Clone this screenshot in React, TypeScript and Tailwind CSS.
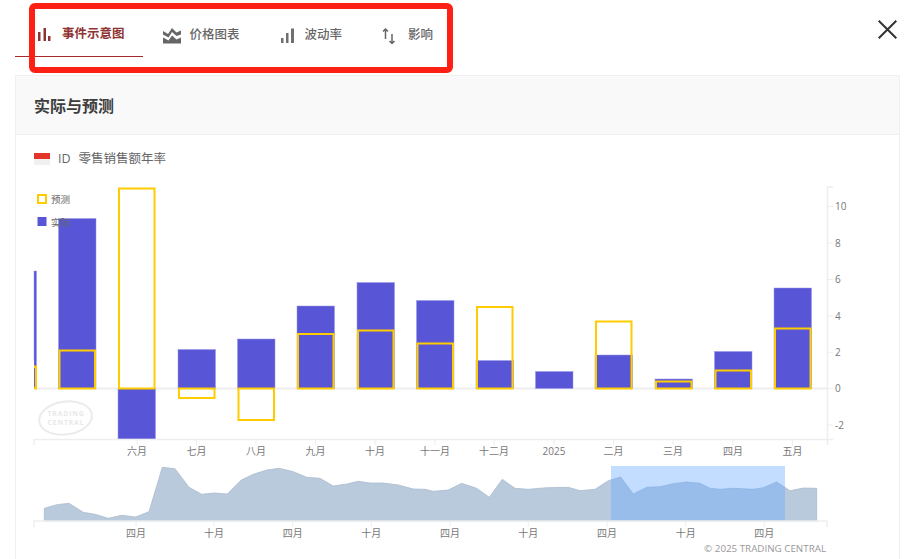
const cjk = '"Open Sans","Noto Sans CJK SC",sans-serif';

const bars: { x: number; a: number; f?: number; w?: number }[] = [
  { x: 34, a: 271, f: 366.5, w: 2.5 },
  { x: 58.5, a: 218.5, f: 350.5 },
  { x: 118, a: 439, f: 188.5 },
  { x: 178, a: 349.5, f: 398 },
  { x: 237.5, a: 339, f: 420 },
  { x: 297, a: 306, f: 334 },
  { x: 357, a: 282.5, f: 330.5 },
  { x: 416.5, a: 300.5, f: 343.5 },
  { x: 476, a: 360.5, f: 307 },
  { x: 535.5, a: 371.5 },
  { x: 595, a: 355, f: 321.5 },
  { x: 655, a: 379, f: 381.5 },
  { x: 714.5, a: 351.5, f: 370.5 },
  { x: 774, a: 288, f: 328.5 },
];
const zero = 388.5;
const months: [number, string][] = [
  [137, "六月"], [196.5, "七月"], [256, "八月"], [315.5, "九月"], [375, "十月"], [435, "十一月"],
  [494, "十二月"], [554, "2025"], [613.5, "二月"], [673, "三月"], [733, "四月"], [792.5, "五月"],
];
const yTicks: [number, string][] = [
  [206.5, "10"], [243, "8"], [279.5, "6"], [316, "4"], [352.3, "2"], [388.5, "0"], [425, "-2"],
];
const navLabels: [number, string][] = [
  [136, "四月"], [214, "十月"], [292.7, "四月"], [371.3, "十月"], [450, "四月"], [528.3, "十月"],
  [607, "四月"], [685.7, "十月"], [764.3, "四月"],
];
const area =
  "44.3,508.3 56.7,504.7 69,503.3 83.3,512.3 95,514.3 108.3,518.3 121.7,515.3 135.7,517 149,511.7 162.3,467.3 175,468.7 189,487.3 201.7,494.3 214,493 227.3,494 241.3,480 253.3,474.3 266.7,470 279.3,468.3 293.3,471.7 306.7,477.3 320,478.3 333.3,486 346.7,484 358.3,481.3 370,483 383.3,483 398.3,485 413.3,489 425,489.3 433.3,491.3 448.3,490 461.7,483.3 476.7,488.3 489.3,497.3 502.3,479.3 515,488.3 528.3,489.3 546.7,487.7 568.3,487.3 580,490.7 595,489.3 608.3,480.7 620.7,477 633.3,494 646.7,487.3 660,486.7 673.3,483.7 686.7,482 700,483.3 710,488.3 720,489.3 733.3,488.3 753.3,489.3 763.3,487.7 776.7,482 790,490.7 803.3,488 816.7,488.3";

function Chart() {
  return (
    <svg width="883" height="379" viewBox="16 180 883 379" className="block" style={{ fontFamily: cjk }}>
      <line x1="34" x2="827" y1={zero} y2={zero} stroke="#eeeeee" strokeWidth="2" />
      {bars.map((b, i) => {
        const w = b.w ?? 37.5;
        return (
          <rect key={i} x={b.x} y={Math.min(b.a, zero)} width={w} height={Math.abs(zero - b.a)} fill="#5856d6" stroke="#9796e6" strokeWidth="0.5" />
        );
      })}
      {bars.map((b, i) =>
        b.f === undefined ? null : (
          <rect
            key={i}
            x={i === 0 ? 33 : b.x + 1}
            y={Math.min(b.f, zero)}
            width={i === 0 ? 3 : 35.5}
            height={Math.abs(zero - b.f)}
            fill="none"
            stroke="#ffcc00"
            strokeWidth="2"
          />
        ),
      )}
      <rect x="30" y="360" width="4" height="32" fill="#ffffff" />
      <g fontSize="9.5" fill="#666666">
        <rect x="38" y="195" width="8" height="8" fill="#ffffff" stroke="#ffcc00" strokeWidth="2" />
        <text x="51" y="203">预测</text>
        <rect x="37.5" y="217" width="9" height="9" fill="#5856d6" />
        <text x="51" y="226">实际</text>
      </g>
      <ellipse cx="65.5" cy="418" rx="26.5" ry="16.5" fill="none" stroke="#ebebeb" strokeWidth="2" transform="rotate(-8 65.5 418)" />
      <g fontSize="6.8" fontWeight="700" fill="#e8e8e8" letterSpacing="0.9" textAnchor="middle" style={{ fontFamily: '"Open Sans",sans-serif' }}>
        <text x="66" y="415.5">TRADING</text>
        <text x="66" y="425">CENTRAL</text>
      </g>
      <g stroke="#eeeeee" fill="none">
        <path d="M833 187H827.5V445" strokeWidth="1.5" />
        <path d="M34 445V439.5H833" strokeWidth="1.5" />
        {yTicks.map(([y]) => <line key={y} x1="827" x2="833" y1={y} y2={y} />)}
        {months.map(([x]) => <line key={x} x1={x} x2={x} y1="440" y2="445" />)}
      </g>
      <g fontSize="10" fill="#777777">
        {yTicks.map(([y, t]) => <text key={t} x="835" y={y + 3.5}>{t}</text>)}
        {months.map(([x, t]) => <text key={t} x={x} y="455" textAnchor="middle">{t}</text>)}
      </g>
      <polygon points={`${area} 816.7,521 44.3,521`} fill="#b9cadd" stroke="#a8b9cc" strokeWidth="0.75" />
      <rect x="611" y="466" width="174" height="55" fill="#66aaff" fillOpacity="0.4" />
      <g stroke="#eeeeee" fill="none">
        <path d="M34 527V521H827V527" strokeWidth="1.5" />
        {navLabels.map(([x]) => <line key={x} x1={x} x2={x} y1="521" y2="527" />)}
      </g>
      <g fontSize="10" fill="#777777">
        {navLabels.map(([x, t]) => <text key={x} x={x} y="536.5" textAnchor="middle">{t}</text>)}
      </g>
      <text x="826" y="552" textAnchor="end" fontSize="9.8" fill="#999999">© 2025 TRADING CENTRAL</text>
    </svg>
  );
}

const BarsIcon = ({ c }: { c: string }) => (
  <svg width="18" height="18" viewBox="0 0 18 18" fill={c}>
    <rect x="3" y="7" width="2.5" height="9" />
    <rect x="8.5" y="3" width="2.5" height="13" />
    <rect x="13" y="11" width="2.5" height="5" />
  </svg>
);
const PriceIcon = () => (
  <svg width="18" height="18" viewBox="0 0 18 18" fill="#666666">
    <path d="M0 5 5 8 9 2 13.5 6.5 18 4.5V8.5L13.5 10 9 6 5.5 11.5 0 8.5Z" />
    <path d="M0 11.5 5.5 14.5 9 9.5 13.5 13.5 18 11.5V17.5H0Z" />
  </svg>
);
const VolIcon = () => (
  <svg width="18" height="18" viewBox="0 0 18 18" fill="#707070">
    <rect x="1" y="12" width="2.5" height="5" />
    <rect x="6" y="7" width="2.5" height="10" />
    <rect x="11" y="2.5" width="3" height="14.5" />
  </svg>
);
const ImpactIcon = () => (
  <svg width="18" height="18" viewBox="0 0 18 18" fill="none" stroke="#666666" strokeWidth="1.5">
    <path d="M3.5 13V3M1 5.5 3.5 3 6 5.5" />
    <path d="M10 8V17.5M7.5 15 10 17.5 12.5 15" />
  </svg>
);

export default function App() {
  return (
    <div className="relative h-[559px] w-[915px] overflow-hidden bg-white" style={{ fontFamily: cjk }}>
      <div className="flex items-start justify-between pl-[15px] pr-[18px]">
        <div className="flex text-[12.5px] leading-[18px] font-medium">
          <div className="flex h-[57px] items-center border-b border-[#a52a2a] pl-5 pr-[18px] pt-[12px] font-semibold text-[#8f3333]">
            <span className="mr-[9px]"><BarsIcon c="#8f3333" /></span>事件示意图
          </div>
          <div className="flex h-[57px] items-center px-5 pt-[12px] text-[#666666]">
            <span className="mr-[9px]"><PriceIcon /></span>价格图表
          </div>
          <div className="flex h-[57px] items-center px-5 pt-[12px] text-[#666666]">
            <span className="mr-[7px]"><VolIcon /></span>波动率
          </div>
          <div className="flex h-[57px] items-center pl-5 pt-[12px] text-[#666666]">
            <span className="mr-2"><ImpactIcon /></span>影响
          </div>
        </div>
        <svg width="19" height="19" viewBox="0 0 19 19" className="mt-[20px]" stroke="#333333" strokeWidth="2" fill="none">
          <path d="M0.7 0.7 18.3 18.3M18.3 0.7 0.7 18.3" />
        </svg>
      </div>
      <div className="mt-[18px] ml-[15px] h-[520px] w-[885px] border border-[#f0f0f0]">
        <div className="flex h-[59px] items-center border-b border-[#f0f0f0] bg-[#f9f9f9] pl-[18px] pt-[2px] text-base font-semibold text-[#3d3d3d]">
          实际与预测
        </div>
        <div className="flex h-[45px] items-center pl-[18px] pt-[3px] text-[12.5px] text-[#666666]">
          <span className="mr-2 flex h-3 w-4 flex-col">
            <span className="h-1/2 bg-[#e5352b]" />
            <span className="h-1/2 bg-[#f0f0f0]" />
          </span>
          <span className="mr-2">ID</span>
          <span>零售销售额年率</span>
        </div>
        <Chart />
      </div>
      <div className="pointer-events-none absolute left-[29px] top-[3px] h-[70px] w-[424px] rounded-[6px] border-[6px] border-[#ff2015]" />
    </div>
  );
}
